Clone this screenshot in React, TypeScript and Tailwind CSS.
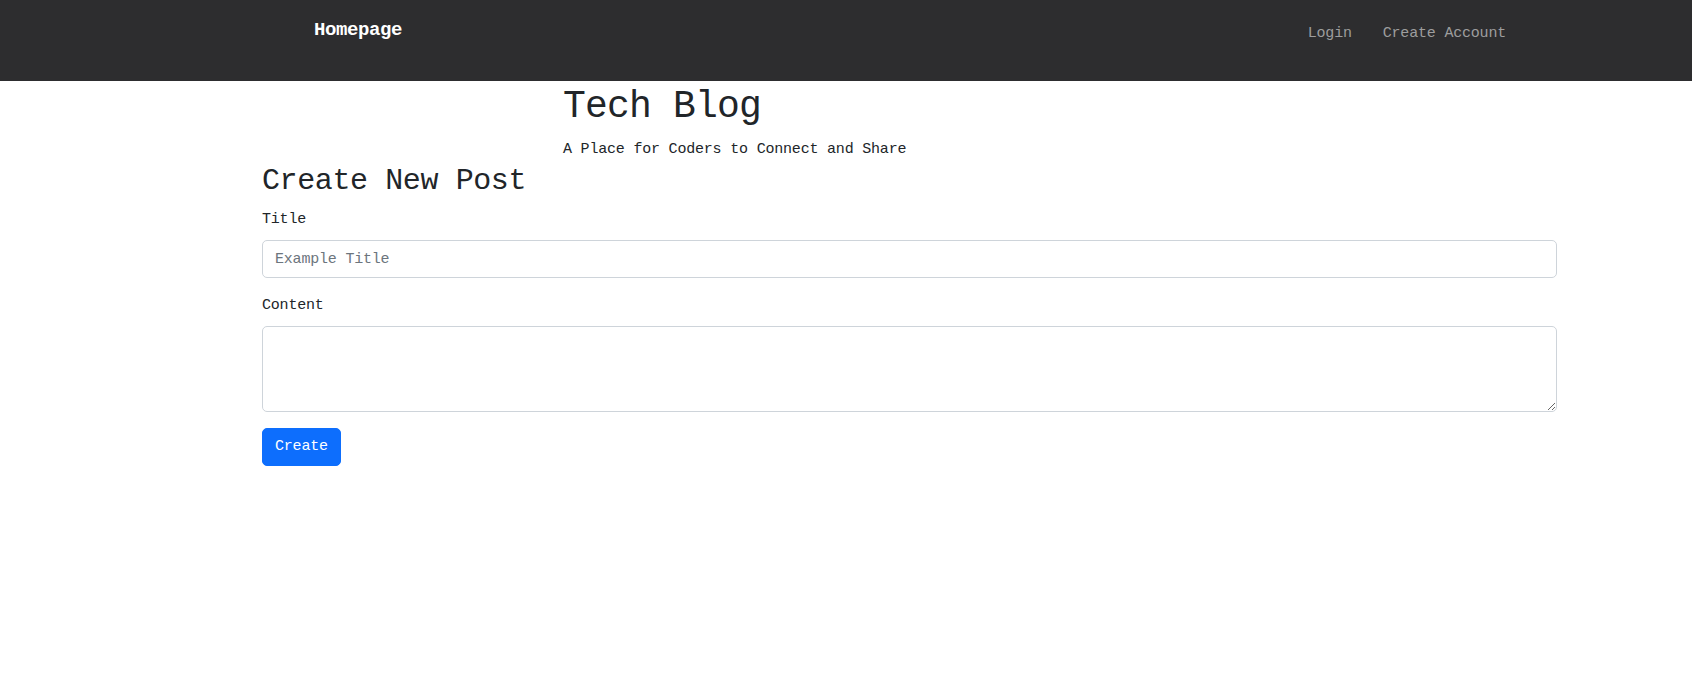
import React from "react";

const mono = "font-['Liberation_Mono','DejaVu_Sans_Mono',monospace]";

const Navbar: React.FC = () => {
  return (
    <nav className="h-[81px] w-full bg-[#2d2d2f]">
      <div className="mx-auto flex w-[1320px] items-start justify-between">
        <a
          href="#"
          className="ml-[128px] mt-[15px] text-[19px] font-bold leading-[30px] tracking-[-0.4px] text-white"
        >
          Homepage
        </a>
        <div className="mt-[22px] flex gap-[31px] text-[15px] leading-6 tracking-[-0.2px] text-[#9d9d9e]">
          <a href="#">Login</a>
          <a href="#">Create Account</a>
        </div>
      </div>
    </nav>
  );
};

const Header: React.FC = () => {
  return (
    <header className="ml-[301px] pt-[2px]">
      <h1 className="text-[38px] leading-[48px] tracking-[-0.8px] text-[#212529]">
        Tech Blog
      </h1>
      <p className="mt-[7px] text-[15px] leading-6 tracking-[-0.2px] text-[#212529]">
        A Place for Coders to Connect and Share
      </p>
    </header>
  );
};

const NewPostForm: React.FC = () => {
  return (
    <form className="mr-[135px]" onSubmit={(e) => e.preventDefault()}>
      <h2 className="text-[30px] leading-[38px] tracking-[-0.4px] text-[#212529]">
        Create New Post
      </h2>
      <div className="mt-2 mb-4">
        <label className="mb-2 block text-[15px] leading-6 tracking-[-0.2px] text-[#212529]">
          Title
        </label>
        <input
          type="text"
          placeholder="Example Title"
          className="block h-[38px] w-full rounded-[5px] border border-[#ced4da] bg-white px-3 py-[6px] text-[15px] leading-6 tracking-[-0.2px] text-[#212529] outline-none placeholder:text-[#6c757d]"
        />
      </div>
      <div className="mb-4">
        <label className="mb-2 block text-[15px] leading-6 tracking-[-0.2px] text-[#212529]">
          Content
        </label>
        <textarea
          rows={3}
          className="block h-[86px] w-full rounded-[5px] border border-[#ced4da] bg-white px-3 py-[6px] text-[15px] leading-6 tracking-[-0.2px] text-[#212529] outline-none"
        />
      </div>
      <button
        type="submit"
        className="h-[38px] rounded-[5px] border border-[#0d6efd] bg-[#0d6efd] px-3 text-[15px] leading-6 tracking-[-0.2px] text-white"
      >
        Create
      </button>
    </form>
  );
};

export default function App() {
  return (
    <div className={`min-h-[679px] w-full bg-white ${mono}`}>
      <Navbar />
      <main className="pl-[262px]">
        <Header />
        <NewPostForm />
      </main>
    </div>
  );
}
